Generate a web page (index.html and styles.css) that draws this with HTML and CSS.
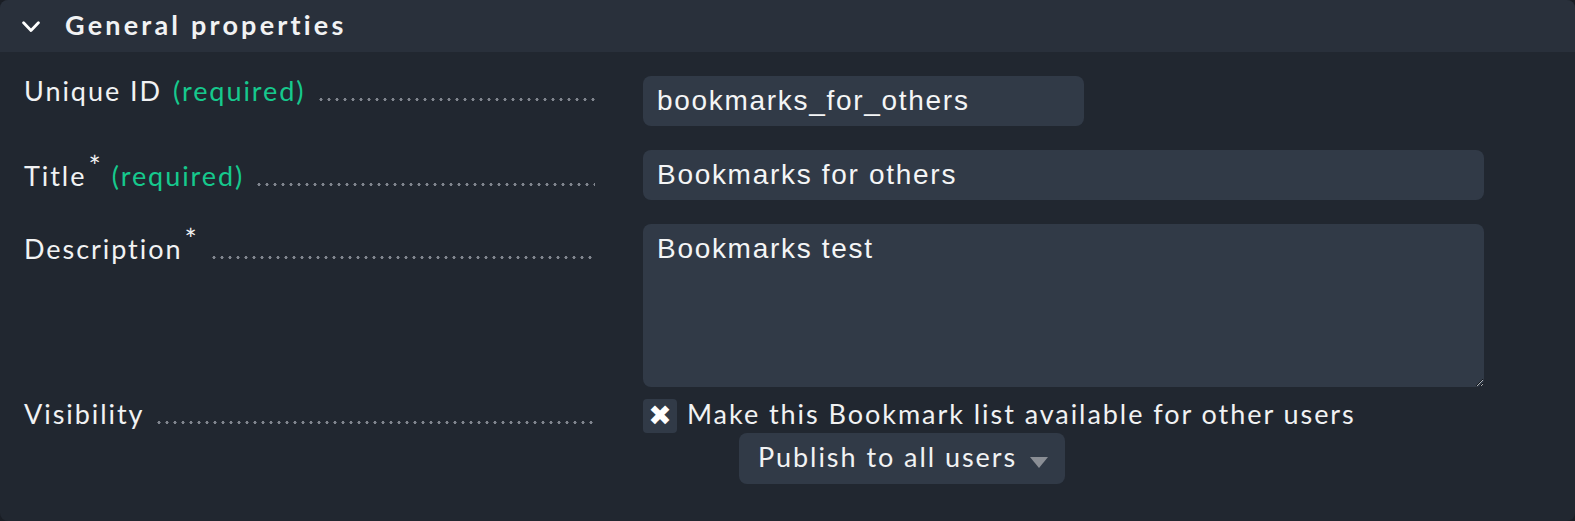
FILE: index.html
```html
<!DOCTYPE html>
<html>
<head>
<meta charset="utf-8">
<link rel="stylesheet" href="styles.css">
</head>
<body>
<div class="panel">
  <div class="head">
    <svg class="chev" width="18" height="12" viewBox="0 0 18 12"><path d="M1.6 1.8 L9 9.4 L16.4 1.8" fill="none" stroke="#ffffff" stroke-width="2.8" stroke-linecap="round" stroke-linejoin="round"/></svg>
    <span class="head-title">General properties</span>
  </div>
  <div class="body">
    <div class="row r1">
      <div class="label"><span>Unique ID</span><span class="req">(required)</span><span class="dots"></span></div>
      <div class="value"><input class="field short" type="text" value="bookmarks_for_others"></div>
    </div>
    <div class="row r2">
      <div class="label"><span>Title<sup class="star">*</sup></span><span class="req">(required)</span><span class="dots"></span></div>
      <div class="value"><input class="field wide" type="text" value="Bookmarks for others"></div>
    </div>
    <div class="row r3">
      <div class="label"><span>Description<sup class="star">*</sup></span><span class="dots"></span></div>
      <div class="value"><textarea class="area">Bookmarks test</textarea></div>
    </div>
    <div class="row r4">
      <div class="label"><span>Visibility</span><span class="dots"></span></div>
      <div class="value vis">
        <div class="check-line">
          <span class="check">&#10006;</span>
          <span class="check-text">Make this Bookmark list available for other users</span>
        </div>
        <div class="select">
          <span>Publish to all users</span>
          <span class="tri"></span>
        </div>
      </div>
    </div>
  </div>
</div>
</body>
</html>
```

FILE: styles.css
```css
html, body {
  margin: 0;
  padding: 0;
  background: #1a1e25;
}

.panel {
  width: 100%;
  height: 100vh;
  box-sizing: border-box;
  background: #212730;
  border-radius: 8px;
  overflow: hidden;
  font-family: Lato, "Noto Sans", sans-serif;
  color: #f1f2f3;
}

.head {
  height: 52px;
  background: #29303b;
  display: flex;
  align-items: center;
  padding-left: 22px;
}

.chev {
  display: block;
  margin-top: 1px;
}

.head-title {
  margin-left: 25px;
  font-weight: 700;
  font-size: 27px;
  letter-spacing: 3.2px;
  line-height: 30px;
  margin-top: -2px;
}

.body {
  padding: 24px 0 0 24px;
}

.row {
  display: grid;
  grid-template-columns: 571px 1fr;
  column-gap: 48px;
  align-items: start;
}

.r2, .r3 { margin-top: 24px; }
.r4 { margin-top: 12px; }

.label {
  display: flex;
  align-items: baseline;
  font-size: 27px;
  line-height: 30px;
  letter-spacing: 1.95px;
  white-space: nowrap;
}

.r2 .label { padding-top: 11px; }
.r3 .label { padding-top: 10px; }

.req {
  color: #16c98d;
  margin-left: 11px;
}

.star {
  font-size: 29px;
  line-height: 0;
  vertical-align: 9px;
  margin-left: 2px;
  letter-spacing: 0;
}

.r2 .req { margin-left: 11px; }

.dots {
  flex: 1;
  display: inline-block;
  height: 3px;
  margin-left: 11px;
  background-image: radial-gradient(circle, #80858e 1.4px, transparent 1.7px);
  background-size: 8px 3px;
  background-repeat: repeat-x;
  background-position: 0 0;
}

.r3 .dots { margin-left: 13px; }

.field, .area {
  box-sizing: border-box;
  border: none;
  outline: none;
  background: #313a47;
  color: #f4f5f6;
  font-family: "Liberation Sans", Arial, sans-serif;
  font-size: 28px;
  letter-spacing: 1.7px;
  border-radius: 8px;
  padding: 0 14px;
  margin: 0;
}

.field {
  display: block;
  height: 50px;
}

.short { width: 441px; }
.wide { width: 841px; }

.area {
  display: block;
  width: 841px;
  height: 163px;
  padding-top: 9px;
  resize: both;
  line-height: 32px;
  color-scheme: dark;
}

.vis {
  display: flex;
  flex-direction: column;
  align-items: flex-start;
}

.check-line {
  display: flex;
  align-items: flex-start;
}

.check {
  width: 34px;
  height: 34px;
  box-sizing: border-box;
  background: #313a47;
  border-radius: 4px;
  display: flex;
  align-items: center;
  justify-content: center;
  font-family: "DejaVu Sans", sans-serif;
  font-size: 28px;
  color: #ffffff;
  line-height: 1;
}

.check-text {
  margin-left: 10px;
  font-size: 27px;
  line-height: 30px;
  letter-spacing: 1.95px;
}

.select {
  margin-left: 96px;
  margin-top: 0;
  width: 326px;
  height: 51px;
  box-sizing: border-box;
  background: #313a47;
  border-radius: 8px;
  padding: 9px 0 0 19px;
  display: flex;
  align-items: flex-start;
  font-size: 27px;
  line-height: 30px;
  letter-spacing: 1.95px;
}

.tri {
  width: 0;
  height: 0;
  border-left: 9px solid transparent;
  border-right: 9px solid transparent;
  border-top: 11px solid #8a8e95;
  margin-left: 13px;
  margin-top: 15px;
}
```
